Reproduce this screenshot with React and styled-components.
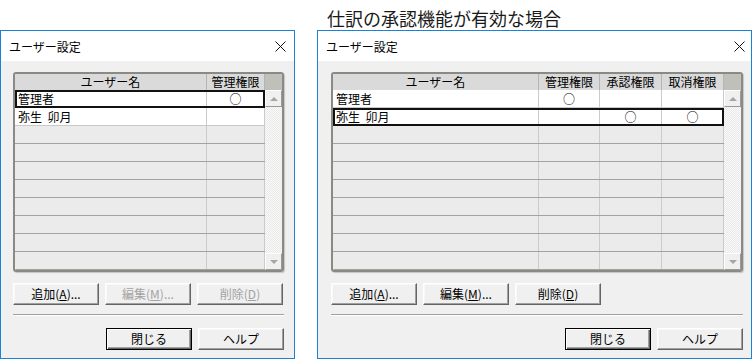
import React from 'react';
import styled, { createGlobalStyle } from 'styled-components';

const GlobalStyle = createGlobalStyle`
  body {
    margin: 0;
    background: #fff;
    font-family: "Noto Sans CJK JP", "Noto Sans", sans-serif;
    color: #000;
  }
`;

const Page = styled.div`
  display: flex;
  gap: 22px;
  align-items: flex-start;
  width: 756px;
  height: 360px;
  overflow: hidden;
`;

const Column = styled.div`
  display: flex;
  flex-direction: column;
  width: ${(p) => p.$w}px;
  flex-shrink: 0;
`;

const Caption = styled.div`
  height: 30px;
  box-sizing: border-box;
  padding: 9px 0 0 10px;
  font-size: 18px;
  line-height: 18px;
  color: #1a1a1a;
  white-space: nowrap;
`;

const Window = styled.div`
  height: 329px;
  box-sizing: border-box;
  border: 1px solid #1883d7;
  background: #f0f0f0;
  display: flex;
  flex-direction: column;
`;

const TitleBar = styled.div`
  height: 30px;
  flex-shrink: 0;
  background: #fff;
  display: flex;
  align-items: center;
  justify-content: space-between;
  padding: 0 ${(p) => p.$pr}px 0 8px;
  font-size: 12px;
`;

const Body = styled.div`
  padding: 11px ${(p) => p.$pr}px 0 ${(p) => p.$pl}px;
  display: flex;
  flex-direction: column;
`;

const ListFrame = styled.div`
  height: 200px;
  box-sizing: border-box;
  border: 2px solid #8a8a84;
  border-radius: 3px;
  box-shadow: 1px 1px 1px rgba(0, 0, 0, 0.18);
  display: flex;
  flex-direction: column;
  overflow: hidden;
`;

const HeaderRow = styled.div`
  display: grid;
  grid-template-columns: ${(p) => p.$cols} 17px;
  height: 16px;
  flex-shrink: 0;
`;

const HeadCell = styled.div`
  background: #dadada;
  border-right: 1px solid #b4b4b4;
  font-size: 12px;
  line-height: 16px;
  text-align: center;
  white-space: nowrap;
  overflow: hidden;
`;

const Corner = styled.div`
  background: #c0c0ba;
`;

const ListBody = styled.div`
  flex: 1;
  display: flex;
`;

const Rows = styled.div`
  flex: 1;
  display: flex;
  flex-direction: column;
`;

const Row = styled.div`
  display: grid;
  grid-template-columns: ${(p) => p.$cols};
  height: 18px;
  box-sizing: border-box;
  background: ${(p) => (p.$filled ? '#fff' : '#ebebeb')};
  border-bottom: 1px solid ${(p) => (p.$filled ? '#c8c8c8' : '#a2a2a2')};
  outline: ${(p) => (p.$selected ? '2px solid #111' : 'none')};
  outline-offset: -2px;
`;

const Cell = styled.div`
  border-right: 1px solid #cbcbcb;
  font-size: 12px;
  line-height: 17px;
  padding: 0 3px;
  text-align: ${(p) => (p.$center ? 'center' : 'left')};
  white-space: pre;
  overflow: hidden;
`;

const ScrollBar = styled.div`
  width: 17px;
  display: flex;
  flex-direction: column;
  background-color: #f7f7f7;
  background-image: repeating-conic-gradient(#e9e9e9 0% 25%, #fafafa 0% 50%);
  background-size: 2px 2px;
`;

const ScrollButton = styled.div`
  height: 17px;
  box-sizing: border-box;
  background: #f0f0f0;
  border: 1px solid;
  border-color: #fff #9a9a9a #9a9a9a #fff;
  display: flex;
  align-items: center;
  justify-content: center;
`;

const Arrow = styled.div`
  width: 0;
  height: 0;
  border-left: 4px solid transparent;
  border-right: 4px solid transparent;
  ${(p) =>
    p.$down ? 'border-top: 4px solid #a6a6a6;' : 'border-bottom: 4px solid #a6a6a6;'}
`;

const Track = styled.div`
  flex: 1;
`;

const ButtonRow = styled.div`
  display: flex;
  gap: 6px;
  justify-content: ${(p) => (p.$end ? 'flex-end' : 'flex-start')};
  margin-top: ${(p) => p.$mt}px;
`;

const Button = styled.button`
  width: 86px;
  height: 22px;
  padding: 0;
  font-family: inherit;
  font-size: 12px;
  line-height: 20px;
  background: #f0f0f0;
  color: ${(p) => (p.disabled ? '#a3a3a3' : '#000')};
  border: 1px solid;
  border-color: ${(p) => (p.$default ? '#000' : '#fff #646464 #646464 #fff')};
  box-shadow: ${(p) =>
    p.$default
      ? 'inset 1px 1px 0 #fff, inset -1px -1px 0 #646464, inset -2px -2px 0 #a0a0a0'
      : 'inset -1px -1px 0 #a0a0a0, inset 1px 1px 0 #f8f8f8'};
  u {
    text-underline-offset: 1px;
  }
`;

const Separator = styled.div`
  margin-top: 9px;
  border-top: 1px solid #a0a0a0;
  border-bottom: 1px solid #fff;
`;

const CloseIcon = () => (
  <svg width="11" height="11" viewBox="0 0 11 11">
    <path d="M0.5 0.5 L10.5 10.5 M10.5 0.5 L0.5 10.5" stroke="#111" strokeWidth="1" fill="none" />
  </svg>
);

const UserDialog = ({ cols, columns, users, pl, pr, titlePr, editable }) => {
  const rows = [...users];
  while (rows.length < 10) rows.push(null);
  return (
    <Window>
      <TitleBar $pr={titlePr}>
        <span>ユーザー設定</span>
        <CloseIcon />
      </TitleBar>
      <Body $pl={pl} $pr={pr}>
        <ListFrame>
          <HeaderRow $cols={cols}>
            <HeadCell>ユーザー名</HeadCell>
            {columns.map((c) => (
              <HeadCell key={c}>{c}</HeadCell>
            ))}
            <Corner />
          </HeaderRow>
          <ListBody>
            <Rows>
              {rows.map((u, i) => (
                <Row key={i} $cols={cols} $filled={!!u} $selected={u && u.selected}>
                  <Cell>{u ? u.name : ''}</Cell>
                  {columns.map((c, j) => (
                    <Cell key={c} $center>
                      {u && u.flags[j] ? '○' : ''}
                    </Cell>
                  ))}
                </Row>
              ))}
            </Rows>
            <ScrollBar>
              <ScrollButton>
                <Arrow />
              </ScrollButton>
              <Track />
              <ScrollButton>
                <Arrow $down />
              </ScrollButton>
            </ScrollBar>
          </ListBody>
        </ListFrame>
        <ButtonRow $mt={11}>
          <Button>
            追加(<u>A</u>)...
          </Button>
          <Button disabled={!editable}>
            編集(<u>M</u>)...
          </Button>
          <Button disabled={!editable}>
            削除(<u>D</u>)
          </Button>
        </ButtonRow>
        <Separator />
        <ButtonRow $mt={12} $end>
          <Button $default>閉じる</Button>
          <Button>ヘルプ</Button>
        </ButtonRow>
      </Body>
    </Window>
  );
};

export default function App() {
  return (
    <>
      <GlobalStyle />
      <Page>
        <Column $w={295}>
          <Caption />
          <UserDialog
            cols="1fr 58px"
            columns={['管理権限']}
            users={[
              { name: '管理者', flags: [true], selected: true },
              { name: '弥生  卯月', flags: [false] },
            ]}
            pl={12}
            pr={10}
            titlePr={8}
            editable={false}
          />
        </Column>
        <Column $w={435}>
          <Caption>仕訳の承認機能が有効な場合</Caption>
          <UserDialog
            cols="1fr 61px 62px 62px"
            columns={['管理権限', '承認権限', '取消権限']}
            users={[
              { name: '管理者', flags: [true, false, false] },
              { name: '弥生  卯月', flags: [false, true, true], selected: true },
            ]}
            pl={13}
            pr={8}
            titlePr={6}
            editable
          />
        </Column>
      </Page>
    </>
  );
}
